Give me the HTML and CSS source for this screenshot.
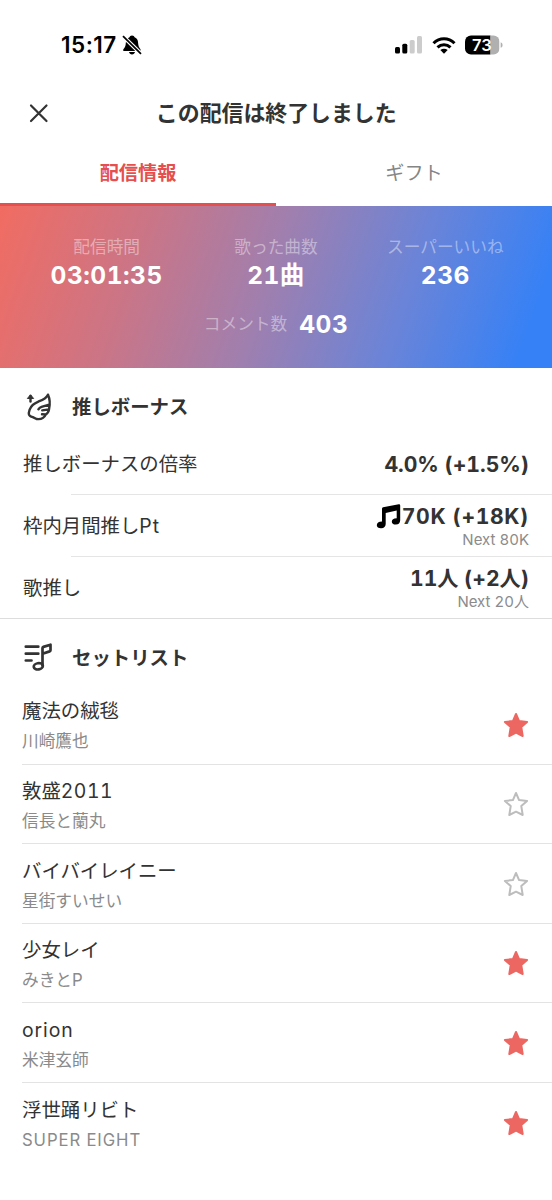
FILE: index.html
```html
<!DOCTYPE html>
<html lang="ja">
<head>
<meta charset="utf-8">
<title>この配信は終了しました</title>
<link rel="stylesheet" href="styles.css">
</head>
<body>
<svg class="defs" width="0" height="0">
  <symbol id="star" viewBox="0 0 28 28"><path d="M14 3 L17.1 10.1 L25.1 10.9 L19.3 16.1 L20.7 25 L14 21.7 L7.3 25 L8.7 16.1 L2.9 10.9 L10.9 10.1 Z"/></symbol>
</svg>
<div class="status">
  <span class="clock">15:17</span>
  <svg class="bell" width="20" height="20" viewBox="0 0 20 20"><path d="M10 .4C11.5 .4 12.4 1.3 12.6 2.3C15.2 3.3 16 5.4 16.1 8C16.2 11.2 17.2 12.7 18.5 14.2V16H1.3V14.2C3 12.6 3.7 11 3.8 8C3.9 5.2 5 3.2 7.5 2.3C7.7 1.3 8.6 .4 10 .4ZM7 17H13C12.6 18.6 11.6 19.4 10 19.4S7.4 18.6 7 17Z"/><path d="M1 1.2L19 18.8" stroke="#fff" stroke-width="4"/><path d="M1 1.2L19 18.8" stroke="#000" stroke-width="1.7"/></svg>
  <svg class="signal" width="28" height="18" viewBox="0 0 28 18"><rect x="0" y="11" width="5" height="6.5" rx="1.5"/><rect x="7.3" y="7.7" width="5" height="9.8" rx="1.5"/><g fill="#ccc"><rect x="14.7" y="4" width="5" height="13.5" rx="1.5"/><rect x="22" y="0" width="5" height="17.5" rx="1.5"/></g></svg>
  <svg class="wifi" width="24" height="17" viewBox="0 0 24 17"><g fill="none" stroke="#000" stroke-width="3"><path d="M1.5 6.3C7.5 .1 16.5 .1 22.5 6.3"/><path d="M5.5 10.4C9.3 6.7 14.7 6.7 18.5 10.4"/></g><path d="M8.3 13.1Q12 10.2 15.7 13.1L12 16.8Z"/></svg>
  <svg class="battery" width="38" height="20" viewBox="0 0 38 20"><defs><clipPath id="cell"><rect x="0" y=".4" width="34.5" height="19.2" rx="6"/></clipPath></defs><g clip-path="url(#cell)"><rect width="25.5" height="20"/><rect x="25.5" width="9" height="20" fill="#b0b0b0"/></g><path d="M35.7 7.2Q37.6 7.6 37.6 10T35.7 12.8Z" fill="#b0b0b0"/><text x="16.8" y="15.8" class="level">73</text></svg>
</div>
<header class="header">
  <svg class="close" width="20" height="20" viewBox="0 0 20 20"><path d="M2 2.5L17.5 18M17.5 2.5L2 18" fill="none" stroke="#333" stroke-width="2.2" stroke-linecap="round"/></svg>
  <h1 class="title">この配信は終了しました</h1>
</header>
<nav class="tabs">
  <div class="tab active">配信情報</div>
  <div class="tab">ギフト</div>
</nav>
<section class="stats">
  <div class="stat-row">
    <div class="stat"><span class="stat-label">配信時間</span><b class="stat-value">03:01:35</b></div>
    <div class="stat"><span class="stat-label">歌った曲数</span><b class="stat-value">21曲</b></div>
    <div class="stat"><span class="stat-label">スーパーいいね</span><b class="stat-value">236</b></div>
  </div>
  <div class="comments"><span class="stat-label">コメント数</span><b class="stat-value">403</b></div>
</section>
<section class="bonus">
  <h2 class="section-head">
    <svg class="section-icon" width="30" height="30" viewBox="0 0 30 30" fill="none" stroke="#333" stroke-width="2.4" stroke-linecap="round" stroke-linejoin="round"><path d="M7.5 9.5V4"/><path d="M4.6 6.2L7.5 2.8L10.4 6.2Z" fill="#333" stroke-width="1"/><path d="M25 2.7C23.5 6.5 20 7.8 15.4 9.6C10.8 11.5 8 14 6.8 17.3C6 19.6 5.4 20.7 6 22.7C6.6 24.5 8 24.8 9.8 25.2L13.5 27C18 27.6 21.4 25.8 22.8 22.4L19 22.3M22.8 22.4C25 21 25.8 19.3 26 17.4L19.2 18.4M26 17.4C27.2 12 27 7 25 2.7M26.2 12.6L18.5 14.9Q16.4 15.6 15.4 17.3"/></svg>
    推しボーナス
  </h2>
  <div class="row"><span class="row-label">推しボーナスの倍率</span><div class="result"><b class="amount rate">4.0% (+1.5%)</b></div></div>
  <div class="row"><span class="row-label">枠内月間推し<span class="latin">Pt</span></span><div class="result"><b class="amount points"><svg class="note" width="25" height="25" viewBox="0 0 25 25"><path d="M6 4.7Q6 3.6 7.1 3.3L22.8 .2Q24.2 0 24.2 1.4V16.3Q24 20.4 19.9 20.6Q16 20.7 15.8 17.8Q15.8 14.4 20.7 14.2V6.4L9.7 8.9V20Q9.5 24 5.2 24.3Q1 24.4 .8 21.3Q.8 17.8 6 17.6Z"/></svg>70K (+18K)</b><span class="next">Next 80K</span></div></div>
  <div class="row"><span class="row-label">歌推し</span><div class="result"><b class="amount rate">11人 (+2人)</b><span class="next">Next 20人</span></div></div>
</section>
<section class="setlist">
  <h2 class="section-head">
    <svg class="section-icon" width="30" height="30" viewBox="0 0 30 30" fill="none" stroke="#333" stroke-width="2.7" stroke-linecap="round" stroke-linejoin="round"><path d="M2.8 3.7H15.3M2.8 10.7H15.3M2.8 17.5H8.5"/><path d="M19.5 22.5V5Q19.5 4.2 20.4 3.9L27.5 1.7V7.3Q27.5 8.1 26.6 8.4L19.5 10.7"/><ellipse cx="15.3" cy="23.3" rx="4.6" ry="3.1" transform="rotate(-10 15.3 23.3)"/></svg>
    セットリスト
  </h2>
  <div class="song"><div class="info"><div class="name">魔法の絨毯</div><div class="artist">川崎鷹也</div></div><svg class="star on"><use href="#star"/></svg></div>
  <div class="song"><div class="info"><div class="name">敦盛<span class="latin digits">2011</span></div><div class="artist">信長と蘭丸</div></div><svg class="star"><use href="#star"/></svg></div>
  <div class="song"><div class="info"><div class="name">バイバイレイニー</div><div class="artist">星街すいせい</div></div><svg class="star"><use href="#star"/></svg></div>
  <div class="song"><div class="info"><div class="name">少女レイ</div><div class="artist">みきと<span class="latin">P</span></div></div><svg class="star on"><use href="#star"/></svg></div>
  <div class="song"><div class="info"><div class="name"><span class="latin">orion</span></div><div class="artist">米津玄師</div></div><svg class="star on"><use href="#star"/></svg></div>
  <div class="song"><div class="info"><div class="name">浮世踊リビト</div><div class="artist"><span class="latin">SUPER EIGHT</span></div></div><svg class="star on"><use href="#star"/></svg></div>
</section>
</body>
</html>
```
FILE: styles.css
```css
* { box-sizing: border-box; }
body { margin: 0; width: 552px; height: 1200px; overflow: hidden; background: #fff; color: #333; font-family: Inter, "Noto Sans CJK JP", sans-serif; font-size: 19.4px; font-variant-numeric: tabular-nums; }
svg { flex: none; display: block; }
.defs { position: absolute; }
h1, h2 { margin: 0; }

.status { display: flex; align-items: center; height: 84px; padding: 6px 49px 0 61px; color: #000; }
.clock { font-size: 22.5px; font-weight: 600; line-height: 28px; width: 57px; white-space: nowrap; letter-spacing: .5px; font-variant-numeric: normal; }
.bell { margin-left: 4px; }
.signal { margin-left: auto; }
.wifi { margin-left: 9px; }
.battery { margin-left: 9px; }
.level { fill: #fff; font-size: 16.5px; font-weight: 600; text-anchor: middle; font-variant-numeric: normal; }

.header { display: flex; align-items: center; height: 58px; padding: 0 29px 0 28.5px; }
.title { flex: 1; margin-right: 19px; text-align: center; font-size: 21.9px; line-height: 32px; font-weight: 700; }

.tabs { display: flex; height: 64px; }
.tab { flex: 1; height: 64px; padding-bottom: 3px; line-height: 62px; text-align: center; font-size: 19.2px; color: #858585; }
.tab.active { color: #e5504f; font-weight: 700; border-bottom: 3px solid #e5504f; }

.stats { height: 162px; padding: 29px 22px 0; background: linear-gradient(109deg, #f16c62 0%, #cb7586 25%, #a07fae 48%, #6a84d8 72%, #3681f6 94%); color: #fff; }
.stat-row { display: grid; grid-template-columns: repeat(3, 1fr); }
.stat { display: flex; flex-direction: column; align-items: center; }
.stat-label { font-size: 16.7px; line-height: 24px; color: rgba(255,255,255,.42); }
.stat-value { font-size: 24.5px; line-height: 32px; font-weight: 650; letter-spacing: .5px; }
.comments { display: flex; justify-content: center; align-items: center; gap: 12px; margin-top: 17px; }

.section-head { display: flex; align-items: center; gap: 19px; height: 65px; padding: 12px 23px 0; font-size: 19.4px; line-height: 28px; }
.bonus { height: 251px; border-bottom: 1px solid #ddd; }
.row { display: flex; justify-content: space-between; align-items: center; height: 62px; padding: 0 23px; background: linear-gradient(#e5e5e5, #e5e5e5) 71px 100% / 100% 1px no-repeat; }
.row:last-child { background: none; }
.row-label { padding-bottom: 3px; }
.latin { letter-spacing: .9px; }
.digits { letter-spacing: .5px; }
.result { display: flex; flex-direction: column; align-items: flex-end; }
.amount { display: flex; align-items: center; font-size: 21.2px; line-height: 28px; font-weight: 650; white-space: pre; }
.rate { letter-spacing: -.05px; }
.points { letter-spacing: .6px; }
.next { font-size: 15px; line-height: 20px; letter-spacing: 0; color: #8b8b8b; }
.note { margin-right: 1px; }

.setlist .section-head { height: 66px; padding-top: 11px; }
.song { display: flex; justify-content: space-between; align-items: center; height: 79.55px; margin-left: 22px; padding-right: 22px; border-bottom: 1px solid #e3e3e3; }
.song:last-child { border: 0; }
.info { padding-top: 4.4px; }
.name { line-height: 30px; }
.artist { font-size: 16.7px; line-height: 30px; color: #8a8a8a; }
.star { width: 28px; height: 28px; margin-top: 1px; fill: none; stroke: #bdbdbd; stroke-width: 2; stroke-linejoin: round; }
.star.on { fill: #ed6762; stroke: #ed6762; }
```
